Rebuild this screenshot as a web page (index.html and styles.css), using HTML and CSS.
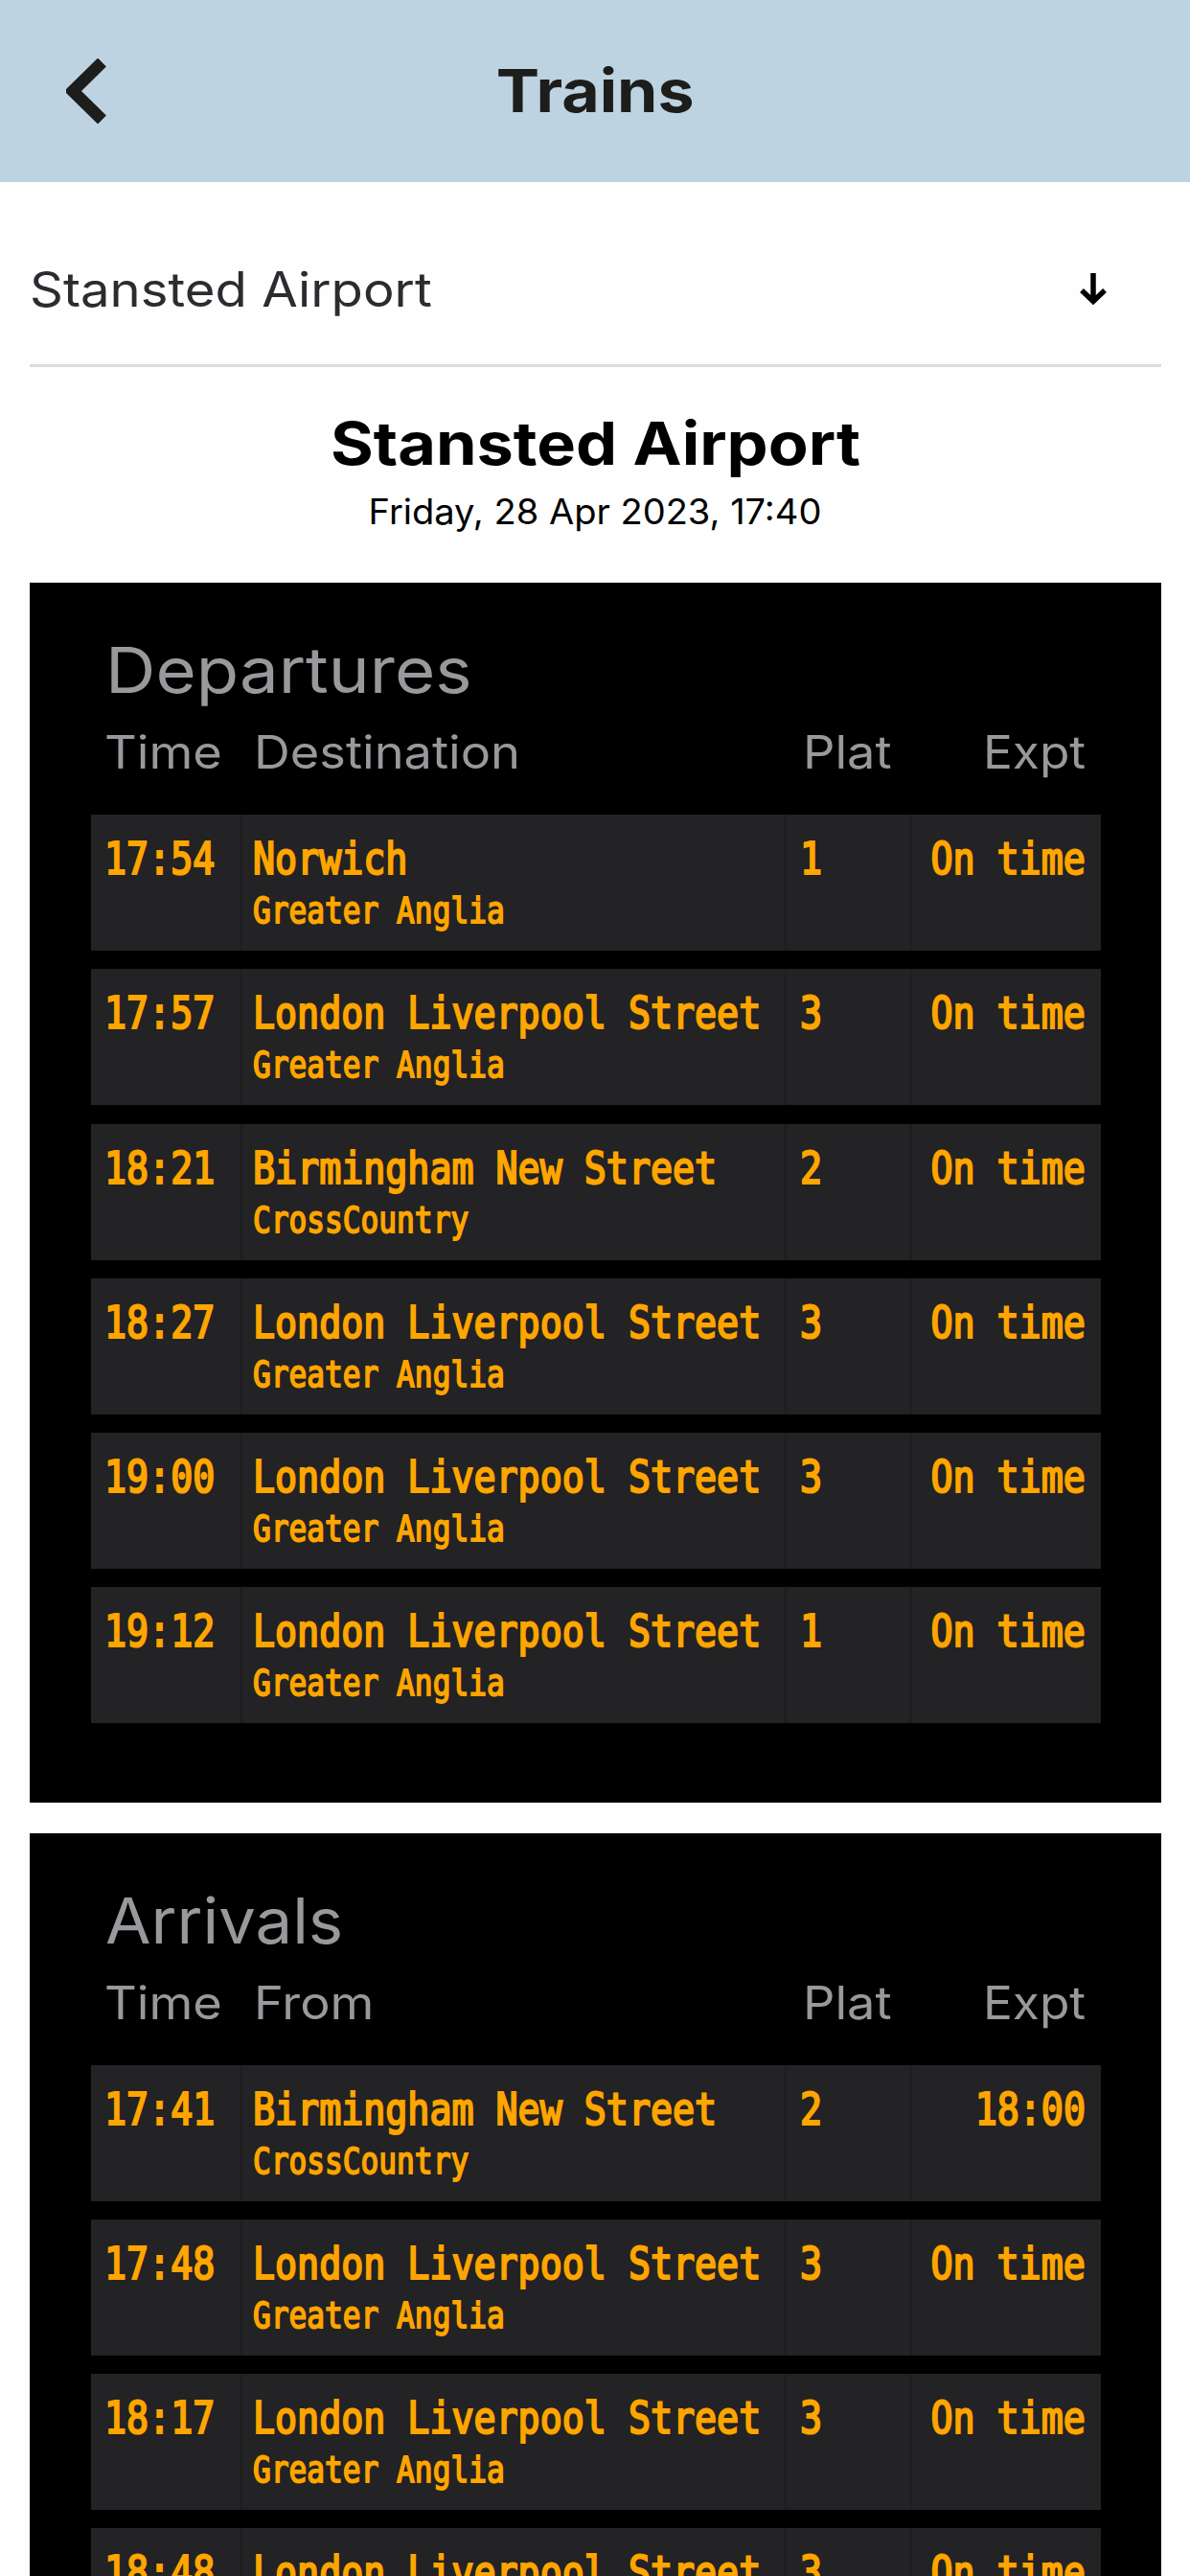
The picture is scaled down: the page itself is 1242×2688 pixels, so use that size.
FILE: index.html
```html
<!DOCTYPE html>
<html lang="en">
<head>
  <meta charset="UTF-8" />
  <meta name="viewport" content="width=device-width, initial-scale=1.0"/>
  <title>Trains</title>
  <link rel="stylesheet" href="styles.css">
</head>
<body>

  <header class="top-bar">
    <svg class="back" viewBox="0 0 42 68"><path d="M37.500 4L7 34L37.500 64" /></svg>
    <h1>Trains</h1>
  </header>

  <div class="station-select">
    <span>Stansted Airport</span>
    <svg class="arrow" viewBox="0 0 28 34"><path d="M14 0V29M2 18L14 29.500L26 18" /></svg>
  </div>

  <div class="station">
    <h2>Stansted Airport</h2>
    <p>Friday, 28 Apr 2023, 17:40</p>
  </div>

  <!-- Departures -->
  <section class="board">
    <h3 class="departures">Departures</h3>
    <div class="heads"><span>Time</span><span>Destination</span><span>Plat</span><span class="expt-head">Expt</span></div>
    <div class="rows">
      <div class="row">
        <div><b>17:54</b></div>
        <div class="place"><b>Norwich</b><small>Greater Anglia</small></div>
        <div><b>1</b></div>
        <div class="expt"><b>On time</b></div>
      </div>
      <div class="row">
        <div><b>17:57</b></div>
        <div class="place"><b>London Liverpool Street</b><small>Greater Anglia</small></div>
        <div><b>3</b></div>
        <div class="expt"><b>On time</b></div>
      </div>
      <div class="row">
        <div><b>18:21</b></div>
        <div class="place"><b>Birmingham New Street</b><small>CrossCountry</small></div>
        <div><b>2</b></div>
        <div class="expt"><b>On time</b></div>
      </div>
      <div class="row">
        <div><b>18:27</b></div>
        <div class="place"><b>London Liverpool Street</b><small>Greater Anglia</small></div>
        <div><b>3</b></div>
        <div class="expt"><b>On time</b></div>
      </div>
      <div class="row">
        <div><b>19:00</b></div>
        <div class="place"><b>London Liverpool Street</b><small>Greater Anglia</small></div>
        <div><b>3</b></div>
        <div class="expt"><b>On time</b></div>
      </div>
      <div class="row">
        <div><b>19:12</b></div>
        <div class="place"><b>London Liverpool Street</b><small>Greater Anglia</small></div>
        <div><b>1</b></div>
        <div class="expt"><b>On time</b></div>
      </div>
    </div>
  </section>

  <!-- Arrivals -->
  <section class="board">
    <h3 class="arrivals">Arrivals</h3>
    <div class="heads"><span>Time</span><span>From</span><span>Plat</span><span class="expt-head">Expt</span></div>
    <div class="rows">
      <div class="row">
        <div><b>17:41</b></div>
        <div class="place"><b>Birmingham New Street</b><small>CrossCountry</small></div>
        <div><b>2</b></div>
        <div class="expt"><b>18:00</b></div>
      </div>
      <div class="row">
        <div><b>17:48</b></div>
        <div class="place"><b>London Liverpool Street</b><small>Greater Anglia</small></div>
        <div><b>3</b></div>
        <div class="expt"><b>On time</b></div>
      </div>
      <div class="row">
        <div><b>18:17</b></div>
        <div class="place"><b>London Liverpool Street</b><small>Greater Anglia</small></div>
        <div><b>3</b></div>
        <div class="expt"><b>On time</b></div>
      </div>
      <div class="row">
        <div><b>18:48</b></div>
        <div class="place"><b>London Liverpool Street</b></div>
        <div><b>3</b></div>
        <div class="expt"><b>On time</b></div>
      </div>
    </div>
  </section>

</body>
</html>
```
FILE: styles.css
```css
* {
  box-sizing: border-box;
}

body {
  margin: 0;
  height: 2688px;
  overflow: hidden;
  background-color: #fefefe;
  font-family: Inter, "Open Sans", sans-serif;
}

h1, h2, h3, p {
  margin: 0;
}

.top-bar {
  display: grid;
  grid-template-columns: 42px 1fr 42px;
  align-items: center;
  height: 190px;
  padding: 0 69px;
  background-color: #bed3e1;
  color: #1d1d1b;
}

/* headings are widened a little */
.top-bar h1 {
  justify-self: center;
  font-size: 62px;
  line-height: 80px;
  transform: scaleX(1.097);
}

.back {
  width: 42px;
  height: 68px;
  fill: none;
  stroke: #1d1d1b;
  stroke-width: 12.5;
}

.station-select {
  display: flex;
  align-items: center;
  justify-content: space-between;
  height: 159px;
  margin: 34px 30px 0 31px;
  padding-right: 57px;
  border-bottom: 3px solid #dcdade;
  font-size: 50px;
  color: #2d2b30;
}

.station-select span {
  transform: scaleX(1.089);
  transform-origin: left;
}

.arrow {
  width: 28px;
  height: 34px;
  fill: none;
  stroke: #000;
  stroke-width: 5.5;
}

.station {
  display: flex;
  flex-direction: column;
  align-items: center;
  height: 225px;
  padding-top: 40px;
  color: #000;
}

.station h2 {
  font-size: 62px;
  line-height: 80px;
  transform: scaleX(1.104);
}

.station p {
  font-size: 37px;
  line-height: 62px;
  transform: scaleX(1.028);
}

.board {
  margin: 0 30px 31.6px 31px;
  padding: 51px 63px 82.5px 64px;
  background-color: #000;
  color: #9a989c;
}

.board h3 {
  width: fit-content;
  margin-left: 15px;
  font-size: 66px;
  font-weight: 400;
  line-height: 80px;
  transform-origin: left;
}

.departures {
  transform: scaleX(1.1);
}

.arrivals {
  transform: scaleX(1.043);
}

.heads {
  display: grid;
  grid-template-columns: 156px 573px 1fr auto;
  height: 111px;
  padding: 0 16px 0 14px;
  font-size: 48px;
  line-height: 92px;
}

.heads span {
  justify-self: start;
  transform: scaleX(1.09);
  transform-origin: left;
}

.heads .expt-head {
  transform: scaleX(1.07);
  transform-origin: right;
}

.rows {
  display: grid;
  gap: 19.3px;
}

.row {
  display: grid;
  grid-template-columns: 156px 566px 129px minmax(0, 1fr);
  gap: 2px;
  height: 142px;
  background-color: #1d1c1e;
  color: #ffa500;
  font-family: "DejaVu Sans Mono", monospace;
}

.row div {
  display: flex;
  flex-direction: column;
  align-items: flex-start;
  padding: 22px 0 0 14px;
  background-color: #232224;
  white-space: nowrap;
}

.row .place {
  padding-left: 11px;
}

/* tall, narrow dot-matrix style lettering */
.row b {
  font-size: 45.5px;
  font-weight: 400;
  line-height: 50px;
  transform: scaleX(0.8415);
  transform-origin: left;
  -webkit-text-stroke: 2.2px #ffa500;
}

.row small {
  margin-top: 4px;
  font-size: 36.6px;
  line-height: 50px;
  transform: scaleX(0.852);
  transform-origin: left;
  -webkit-text-stroke: 1.8px #ffa500;
}

.row .expt {
  align-items: flex-end;
  padding: 22px 16px 0 0;
}

.row .expt b {
  transform-origin: right;
}
```
